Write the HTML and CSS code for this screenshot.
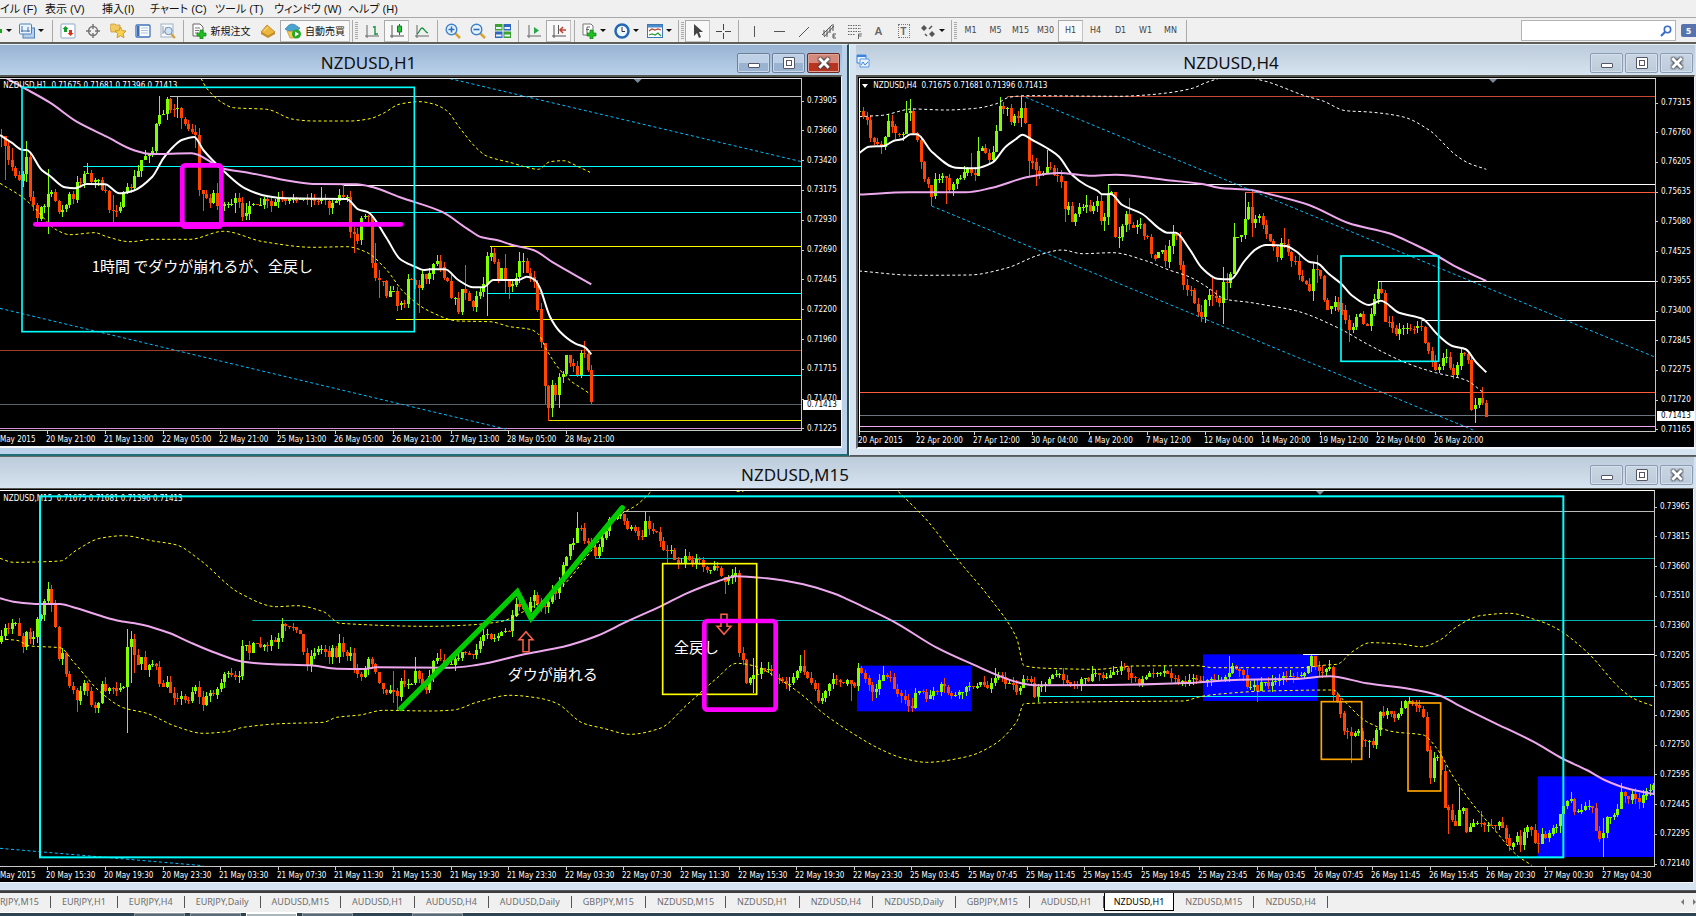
FILE: index.html
```html
<!DOCTYPE html>
<html lang="ja">
<head>
<meta charset="utf-8">
<title>NZDUSD,H1</title>
<link rel="stylesheet" href="styles.css">
</head>
<body>
<nav class="menu">
  <button>イル (F)</button><button>表示 (V)</button><button>挿入(I)</button><button>チャート (C)</button><button>ツール (T)</button><button>ウィンドウ (W)</button><button>ヘルプ (H)</button>
</nav>
<div class="toolbar" role="toolbar">
  <button class="tool tool-edge" aria-label="新規チャート"><svg class="edge" viewBox="0 0 3 16"><path d="M0 6h2v4H0z" fill="#1fa01f"/></svg><i class="caret"></i></button>
  <button class="tool tool-wide" aria-label="チャート一覧"><svg class="ic" viewBox="0 0 16 16"><rect x="4" y="5" width="11.500" height="10" fill="#b7cfe8" stroke="#4f82b8"/><rect x=".5" y="1" width="12" height="10" rx="1" fill="#eaf3fc" stroke="#4f82b8"/><path d="M3 3v6M2 8h9M9 4v5" stroke="#3f72a8" fill="none"/></svg><i class="caret"></i></button>
  <i class="sep"></i>
  <button class="tool" aria-label="気配値表示"><svg class="ic" viewBox="0 0 16 16"><rect x="1" y="1" width="14" height="14" rx="1" fill="#fff" stroke="#8ba9c8"/><path d="M5.500 3l3 3H7v3H4V6H2.500z" fill="#159a2c"/><path d="M10.500 13l-3-3H9V7h3v3h1.500z" fill="#df3318"/></svg></button>
  <button class="tool" aria-label="データウィンドウ"><svg class="ic" viewBox="0 0 16 16" fill="none" stroke="#777"><circle cx="8" cy="8" r="4.500" stroke-width="1.500"/><path d="M8 1v5M8 10v5M1 8h5M10 8h5" stroke-width="1.500"/></svg></button>
  <button class="tool" aria-label="ナビゲーター"><svg class="ic" viewBox="0 0 16 16"><path d="M0 3l1-2h4l1 1h4v7H1z" fill="#f1cb62" stroke="#c2953a" stroke-width=".7"/><path d="M10.500 4l1.700 3.600 3.800.4-2.800 2.700.8 4-3.500-2-3.500 2 .8-4L5 8l3.800-.4z" fill="#fbd24c" stroke="#c08a24" stroke-width=".8"/></svg></button>
  <button class="tool" aria-label="ターミナル"><svg class="ic" viewBox="0 0 16 16"><rect x="1" y="2" width="14" height="12" rx="1" fill="#fff" stroke="#3f74bb" stroke-width="1.300"/><path d="M2 3h2.500v10H2z" fill="#3c6db5"/><path d="M6 5h7M6 7.500h7M6 10h7" stroke="#a9c2df"/></svg></button>
  <button class="tool" aria-label="ストラテジーテスター"><svg class="ic" viewBox="0 0 16 16"><rect x="1" y="1" width="12" height="13" fill="#f7fafd" stroke="#9fb1c4"/><path d="M3 3v8M5 5h2M3 9h4" stroke="#8899aa"/><circle cx="8.500" cy="8" r="3.700" fill="#cfe3f5" stroke="#7090b0"/><path d="M11 11l4 4" stroke="#d79b2e" stroke-width="2"/></svg></button>
  <i class="sep"></i>
  <button class="tool tool-text tool-order"><svg class="ic" viewBox="0 0 16 16"><path d="M2 1h7l3 3v9H2z" fill="#fff" stroke="#666"/><path d="M4 5h5M4 7.500h4M4 10h3" stroke="#777"/><path d="M9 7h3v3h3v3h-3v3H9v-3H6v-3h3z" fill="#22bf22" stroke="#0d7f12" stroke-width=".7"/></svg>新規注文</button>
  <button class="tool" aria-label="メタエディター"><svg class="ic" viewBox="0 0 16 16"><path d="M1 9l6-7 8 7-7 4z" fill="#edb73e" stroke="#a9741b" stroke-width=".7"/><path d="M1 9v2l7 4 7-4V9l-7 4z" fill="#c68a23"/><path d="M4 8l4-4" stroke="#ffe49a"/></svg></button>
  <button class="tool tool-text tool-auto on"><svg class="ic" viewBox="0 0 16 16"><path d="M2 8h11l-2 7H5z" fill="#f0ca50" stroke="#b68d26" stroke-width=".6"/><path d="M0 6c2-1 3-5 7-5s5 3 8 4c-1 3-13 4-15 1z" fill="#4ba3cf" stroke="#2b78a0" stroke-width=".6"/><circle cx="11.500" cy="11" r="4.500" fill="#28a728"/><path d="M10 8.500l4 2.500-4 2.500z" fill="#fff"/></svg>自動売買</button>
  <i class="sep sep-thin"></i><i class="grip"></i>
  <button class="tool" aria-label="バーチャート"><svg class="ic" viewBox="0 0 16 16" fill="none"><path d="M3 2v13M1 13h14" stroke="#666"/><path d="M11 3v9M9 4h2M11 11h3" stroke="#1a9140" stroke-width="1.400"/></svg></button>
  <button class="tool on" aria-label="ローソク足"><svg class="ic" viewBox="0 0 16 16" fill="none"><path d="M3 2v13M1 13h14M10.500 1v11" stroke="#555"/><path d="M8.500 3h4v6h-4z" fill="#29c43c" stroke="#0f7d25"/></svg></button>
  <button class="tool" aria-label="ラインチャート"><svg class="ic" viewBox="0 0 16 16" fill="none"><path d="M3 2v13M1 13h14" stroke="#666"/><path d="M3 11c3-2 3-6 5-6s3 4 6 5" stroke="#1a9140" stroke-width="1.300"/></svg></button>
  <i class="sep"></i>
  <button class="tool" aria-label="ズームイン"><svg class="ic" viewBox="0 0 16 16"><path d="M10 10l5 5" stroke="#d9a336" stroke-width="2.500"/><circle cx="6.500" cy="6.500" r="5.300" fill="#e6f3ff" stroke="#3f83c9" stroke-width="1.400"/><path d="M3.500 6.500h6M6.500 3.500v6" stroke="#2c6fb8" stroke-width="1.600"/></svg></button>
  <button class="tool" aria-label="ズームアウト"><svg class="ic" viewBox="0 0 16 16"><path d="M10 10l5 5" stroke="#d9a336" stroke-width="2.500"/><circle cx="6.500" cy="6.500" r="5.300" fill="#e6f3ff" stroke="#3f83c9" stroke-width="1.400"/><path d="M3.500 6.500h6" stroke="#2c6fb8" stroke-width="1.600"/></svg></button>
  <button class="tool" aria-label="整列"><svg class="ic" viewBox="0 0 16 16"><path d="M0 1h7.500v6.500H0zM8.500 8.500H16V15H8.500z" fill="#3aa32f"/><path d="M8.500 1H16v6.500H8.500zM0 8.500h7.500V15H0z" fill="#2f66c2"/><path d="M1 4h5.500v2H1zM9.500 4H15v2H9.500zM1 11.500h5.500v2H1zM9.500 11.500H15v2H9.500z" fill="#e6f1fb"/></svg></button>
  <i class="sep"></i>
  <button class="tool" aria-label="自動スクロール"><svg class="ic" viewBox="0 0 16 16"><path d="M3 2v13M1 13h14" stroke="#666"/><path d="M8 4l5 3.500L8 11z" fill="#28a846"/></svg></button>
  <button class="tool on" aria-label="チャートシフト"><svg class="ic" viewBox="0 0 16 16" fill="none"><path d="M3 2v13M1 13h14M7.500 2v9" stroke="#555"/><path d="M15 7H9M12 4L9 7l3 3" stroke="#c8402c" stroke-width="1.500"/></svg></button>
  <i class="sep"></i>
  <button class="tool tool-drop" aria-label="インディケータ"><svg class="ic" viewBox="0 0 16 16"><path d="M2 1h8l2 2v9H2z" fill="#fff" stroke="#777"/><path d="M6 10V4h3M5 6.500h3" stroke="#666" fill="none"/><path d="M9 7h3v3h3v3h-3v3H9v-3H6v-3h3z" fill="#22bf22" stroke="#0d7f12" stroke-width=".7"/></svg><i class="caret"></i></button>
  <button class="tool tool-drop" aria-label="時間足設定"><svg class="ic" viewBox="0 0 16 16"><circle cx="8" cy="8" r="6.500" fill="#eef6fe" stroke="#2368b4" stroke-width="2.500"/><path d="M8 4v4.500h3" fill="none" stroke="#333"/></svg><i class="caret"></i></button>
  <button class="tool tool-drop" aria-label="テンプレート"><svg class="ic" viewBox="0 0 16 16"><rect x=".5" y="1.500" width="15" height="13" fill="#fff" stroke="#3c78b4"/><path d="M1 2h14v2.500H1z" fill="#4b8dcc"/><path d="M2 8l3-2 3 1 3-1 3 1" fill="none" stroke="#b8402b" stroke-width="1.200"/><path d="M2 12l3-1 3 1 3-2 3 3" fill="none" stroke="#279b3b" stroke-width="1.200"/></svg><i class="caret"></i></button>
  <i class="sep sep-thin"></i><i class="grip"></i>
  <button class="tool on" aria-label="カーソル"><svg class="ic" viewBox="0 0 16 16"><path d="M4 1v12l3-3 2 5 2-1-2-5h4z" fill="#444"/></svg></button>
  <button class="tool" aria-label="十字カーソル"><svg class="ic" viewBox="0 0 16 16"><path d="M8.500 1v6M8.500 10v6M1 8.500h6M10 8.500h6" stroke="#444"/></svg></button>
  <i class="sep"></i>
  <button class="tool" aria-label="垂直線"><svg class="ic" viewBox="0 0 16 16"><path d="M8.500 3v11" stroke="#555"/></svg></button>
  <button class="tool" aria-label="水平線"><svg class="ic" viewBox="0 0 16 16"><path d="M3 8.500h11" stroke="#555"/></svg></button>
  <button class="tool" aria-label="トレンドライン"><svg class="ic" viewBox="0 0 16 16"><path d="M3 14L13 4" stroke="#555"/></svg></button>
  <button class="tool" aria-label="チャネル"><svg class="ic" viewBox="0 0 16 16" fill="none" stroke="#555"><path d="M1 12L11 2M3 14L13 3M6 7v7M9 4v6M3 7v6M12 1v7"/><path d="M15 11h-3v4h3M12 13h2"/></svg></button>
  <button class="tool" aria-label="フィボナッチ"><svg class="ic" viewBox="0 0 16 16" fill="none" stroke="#666"><path d="M2 2.500h13M2 5.500h13M2 8.500h13M2 11.500h7" stroke-dasharray="1.500 1"/><path d="M12.500 16v-5H16M12.500 13h3"/></svg></button>
  <button class="tool tool-a">A</button>
  <button class="tool tool-a tool-t"><span>T</span></button>
  <button class="tool tool-drop" aria-label="矢印"><svg class="ic" viewBox="0 0 16 16" fill="#555"><path d="M4 2l3 3-3 3-3-3zM12 8l3 3-3 3-3-3z"/><path d="M9 6l3-3M5 11l2 2" stroke="#555" stroke-width="1.500"/></svg><i class="caret"></i></button>
  <i class="sep sep-thin"></i><i class="grip"></i>
  <button class="tool tf">M1</button><button class="tool tf">M5</button><button class="tool tf">M15</button><button class="tool tf">M30</button><button class="tool tf on">H1</button><button class="tool tf">H4</button><button class="tool tf">D1</button><button class="tool tf">W1</button><button class="tool tf">MN</button>
  <i class="sep"></i>
  <div class="search"><input type="text" aria-label="検索"><svg viewBox="0 0 12 12" fill="none" stroke="#3a6cc8" stroke-width="1.600"><circle cx="7.500" cy="4.500" r="3.200"/><path d="M5 7l-4 4" stroke-width="2.200"/></svg></div>
  <button class="chat" aria-label="メッセージ"><span>5</span></button>
</div>

<main class="desk">
  <section class="win win-h1 active">
    <header class="bar"><h2>NZDUSD,H1</h2><button class="wb min" aria-label="最小化"><i></i></button><button class="wb max" aria-label="最大化"><i></i></button><button class="wb close" aria-label="閉じる"><svg viewBox="0 0 12 12"><path d="M2 2l8 8M10 2l-8 8"/></svg></button></header>
    <div class="chart" id="h1"></div>
  </section>
  <section class="win win-h4">
    <header class="bar"><svg class="docs" viewBox="0 0 14 14"><path d="M1 1h9v8H1z" fill="#e8f2fd" stroke="#3d84dd"/><path d="M1 1h9v2H1z" fill="#3d84dd"/><path d="M4 5h9v8H4z" fill="#e8f2fd" stroke="#5a9aea"/><path d="M5 11l2-3 2 3 3-3" fill="none" stroke="#3d84dd"/></svg><h2>NZDUSD,H4</h2><button class="wb min" aria-label="最小化"><i></i></button><button class="wb max" aria-label="最大化"><i></i></button><button class="wb close" aria-label="閉じる"><svg viewBox="0 0 12 12"><path d="M2 2l8 8M10 2l-8 8"/></svg></button></header>
    <div class="chart" id="h4"></div>
  </section>
  <section class="win win-m15">
    <header class="bar"><h2>NZDUSD,M15</h2><button class="wb min" aria-label="最小化"><i></i></button><button class="wb max" aria-label="最大化"><i></i></button><button class="wb close" aria-label="閉じる"><svg viewBox="0 0 12 12"><path d="M2 2l8 8M10 2l-8 8"/></svg></button></header>
    <div class="chart" id="m15"></div>
  </section>
</main>

<nav class="tabs">
  <button>RJPY,M15</button><button>EURJPY,H1</button><button>EURJPY,H4</button><button>EURJPY,Daily</button><button>AUDUSD,M15</button><button>AUDUSD,H1</button><button>AUDUSD,H4</button><button>AUDUSD,Daily</button><button>GBPJPY,M15</button><button>NZDUSD,M15</button><button>NZDUSD,H1</button><button>NZDUSD,H4</button><button>NZDUSD,Daily</button><button>GBPJPY,M15</button><button>AUDUSD,H1</button><button class="current">NZDUSD,H1</button><button>NZDUSD,M15</button><button>NZDUSD,H4</button>
  <span class="scroll"><i class="left"></i><i class="right"></i></span>
</nav>
<footer class="taskbar"><i></i><i></i><i class="lit"></i><i></i><i class="far"></i></footer>
<script src="charts.js"></script>
</body>
</html>
```
FILE: styles.css
```css
* { box-sizing: border-box; }
html, body { height: 100%; }
body {
  margin: 0;
  display: grid;
  grid-template-columns: minmax(0, 1fr);
  grid-template-rows: 18px 26px minmax(0, 1fr) 22px 3px;
  background: #f0f0f0;
  font-family: "Noto Sans", "Noto Sans CJK JP", sans-serif;
  color: #111;
  overflow: hidden;
}
button { font: inherit; color: inherit; border: 0; background: none; padding: 0; margin: 0; }

.menu {
  display: grid;
  grid-template-columns: 45px 57px 48px 65px 59px 74px 60px;
  font-family: "Liberation Sans", "Noto Sans CJK JP", sans-serif;
  font-size: 11px;
  line-height: 14px;
  font-feature-settings: "palt";
  border-bottom: 1px solid #a8a8a8;
}
.menu button { text-align: left; white-space: nowrap; }

.toolbar {
  display: flex;
  align-items: center;
  padding-top: 1px;
  border-bottom: 2px solid #5e5f58;
  background: #f0f0f0;
}
.tool {
  flex: none;
  width: 25px;
  height: 22px;
  display: flex;
  align-items: center;
  justify-content: center;
}
.ic { width: 16px; height: 16px; flex: none; }
.edge { width: 3px; height: 16px; }
.caret { border: 3px solid transparent; border-top-color: #111; border-bottom-width: 0; margin-left: 3px; }
.tool-edge { width: 14px; justify-content: flex-start; }
.tool-wide { width: 35px; }
.tool-drop { width: 33px; }
.tool.on { background: #f8f8f8; border: 1px solid #c2c2c2; border-top-color: #a9a9a9; border-left-color: #a9a9a9; }
.tool-text {
  gap: 4px;
  font-family: "Noto Sans CJK JP", sans-serif;
  font-size: 10px;
  line-height: 12px;
  white-space: nowrap;
}
.tool-order { width: 69px; }
.tool-auto { width: 70px; }
.sep { flex: none; width: 1px; height: 22px; margin: 0 2px 0 3px; background: #aaa; }
.sep-thin { margin: 0 1px 0 2px; }
.grip { flex: none; width: 3px; height: 18px; margin: 0 1px; background: repeating-linear-gradient(#aaa 0 1px, #f0f0f0 1px 2px); }
.tool-a { font-size: 11px; font-weight: 600; color: #666; }
.tool-t span { border: 1px dotted #777; width: 12px; line-height: 12px; }
.tf { font-family: "DejaVu Sans", sans-serif; font-size: 8px; color: #444; }
.search {
  margin-left: auto;
  width: 155px;
  height: 21px;
  display: flex;
  align-items: center;
  background: #fff;
  border: 1px solid #b4b4b4;
}
.search input { flex: 1; min-width: 0; height: 17px; border: 0; outline: 0; background: none; }
.search svg { width: 12px; height: 12px; margin-right: 3px; }
.chat { width: 20px; height: 20px; padding-left: 5px; overflow: hidden; }
.chat span { display: block; width: 20px; height: 13px; padding-left: 5px; background: #5673ad; color: #fff; font-size: 9px; font-weight: 700; line-height: 13px; text-align: left; border-radius: 2px; }

.desk {
  display: grid;
  grid-template-columns: minmax(0, 849fr) minmax(0, 847fr);
  grid-template-rows: minmax(0, 412fr) minmax(0, 435fr);
  background: #b9cde0;
}
.win {
  display: flex;
  flex-direction: column;
  min-width: 0;
  min-height: 0;
  background: #d6e3f0;
  border-top: 1px solid #e8f0f8;
  border-bottom: 1px solid #55585c;
}
.win-h1 { background: #bad1ea; padding-right: 5px; padding-bottom: 6px; border-right: 2px solid #2b4c55; border-bottom: 2px solid #1f6c74; }
.win-h4 { padding: 0 1px 6px 6px; border-left: 1px solid #f4f8fc; }
.win-m15 { grid-column: 1 / -1; padding: 0 2px 7px 0; border-top-color: #66696c; }
.bar {
  flex: none;
  height: 30px;
  display: flex;
  align-items: center;
  gap: 2px;
  padding: 5px 2px 0 0;
  background: linear-gradient(#bccbda, #d6e3f0);
}
.active .bar { background: linear-gradient(#98b3d2, #bad1ea); }
.win-m15 .bar { height: 31px; padding: 4px 1px 0 0; }
.bar h2 { flex: 1; margin: 0; padding-left: 2px; font-size: 17px; font-weight: 400; line-height: 20px; text-align: center; }
.docs { width: 14px; height: 14px; align-self: flex-start; margin-top: 4px; }
.wb {
  width: 33px;
  height: 20px;
  display: flex;
  align-items: center;
  justify-content: center;
  border: 1px solid #8b9bb2;
  border-radius: 2px;
  background: linear-gradient(#c9d6e4, #bccbdb);
  box-shadow: inset 0 0 0 1px #d5e0ec;
}
.active .wb { background: linear-gradient(#bdd0e6 50%, #9ab3d0 50%); border-color: #6c809b; box-shadow: inset 0 0 0 1px #c9d9ea; }
.wb.min i { width: 12px; height: 5px; margin-top: 6px; background: #fff; border: 1px solid #556; border-radius: 1px; }
.wb.max i { width: 12px; height: 12px; border: 1px solid #556; background: #fff; padding: 3px; border-radius: 1px; }
.wb.max i::before { content: ""; display: block; width: 4px; height: 4px; background: #fff; outline: 1px solid #556; }
.wb svg { width: 14px; height: 14px; }
.wb path { stroke: #fff; stroke-width: 2.500; fill: none; filter: drop-shadow(0 0 1px #333) drop-shadow(0 0 1px #445); }
.active .wb.close { background: linear-gradient(#d58a7c 50%, #b8341e 50%); border-color: #6a2a26; box-shadow: inset 0 0 0 1px #dba297; }

.chart {
  flex: 1;
  min-height: 0;
  position: relative;
  display: grid;
  grid-template-columns: minmax(0, 1fr) 39px;
  grid-template-rows: minmax(0, 1fr) 15px;
  padding-top: 1px;
  background: #000;
  border-top: 2px solid #55564f;
  border-right: 2px solid #f2f6fa;
  border-bottom: 2px solid #f2f6fa;
}
.win-h1 .chart { border-right-width: 1px; }
.win-h4 .chart { border-left: 2px solid #666; padding-left: 1px; grid-template-columns: minmax(0, 1fr) 38px; border-right-width: 1px; }
.win-m15 .chart { grid-template-columns: minmax(0, 1fr) 38px; border-top-width: 1px; border-right-width: 1px; border-bottom-width: 1px; }
.plot { width: 100%; height: 100%; min-height: 0; overflow: hidden; border-top: 1px solid #e0e0e0; border-right: 1px solid #c8c8c8; border-bottom: 1px solid #c8c8c8; }
.win-h4 .plot { border-left: 1px solid #fff; }
.win-m15 .plot { border-top-color: #fff; }
.times { width: 100%; height: 15px; overflow: visible; grid-row: 2; grid-column: 1; }
.times text, .plot .quote, .prices { font-family: "DejaVu Sans Condensed", sans-serif; font-size: 8px; }
.times text, .plot .quote { fill: #fff; white-space: pre; }
.times path, .plot path { fill: none; }
.prices {
  grid-column: 2;
  grid-row: 1 / 3;
  position: relative;
  display: flex;
  flex-direction: column;
  justify-content: space-between;
  padding: 18px 0 12px;
  color: #fff;
  line-height: 10px;
}
.prices span { display: flex; align-items: center; gap: 3px; }
.prices span::before { content: ""; width: 2px; height: 1px; background: #ccc; }
.win-h4 .prices { padding: 20px 0 12px; }
.win-m15 .prices { padding: 12px 0 13px; }
.prices b {
  position: absolute;
  left: 1px;
  right: 0;
  top: 322px;
  padding-left: 4px;
  background: #fff;
  color: #000;
  font-weight: 400;
}
.win-h4 .prices b { top: 333px; }
.plot .note { fill: #fff; font-size: 15px; font-family: "Noto Sans CJK JP", sans-serif; }

.tabs {
  display: flex;
  align-items: center;
  padding-bottom: 1px;
  background: #f0f0f0;
  border-top: 2px solid #3c3c3c;
  border-bottom: 1px solid #fff;
  font-size: 9px;
  line-height: 12px;
  color: #6d6d6d;
}
.tabs button { flex: none; padding: 0 11px; border-right: 1px solid #555; white-space: nowrap; }
.tabs button:first-child { padding-left: 0; }
.tabs .current { align-self: stretch; padding: 0 9px; background: #fff; color: #000; border: 1px solid #000; border-top: 0; }
.scroll { margin-left: auto; display: flex; gap: 9px; }
.scroll i { border: 3px solid transparent; }
.scroll .left { border-right-color: #777; border-left-width: 0; }
.scroll .right { border-left-color: #777; border-right-width: 0; }
.taskbar { display: flex; gap: 5px; padding-left: 134px; background: #2d4450; }
.taskbar i { width: 51px; background: #5b6c76; border: 1px solid #8d999f; border-bottom: 0; }
.taskbar .lit { background: #a9b6bb; border-color: #fff; }
.taskbar .far { margin-left: 54px; }
```
FILE: charts.js
```js
// Chart geometry is stored in thirds of a pixel, measured from the pane's reference corner.
const U = 3;
const PITCH = 10.8;
const CYAN = '#00ffff', TEAL = '#00b4b4', WHITE = '#ffffff', YELLOW = '#ffff00', PINK = '#eea9ee';
const UP = '#7fff00', DOWN = '#ff4500', SKY = '#00bfff', MAGENTA = '#ff00ff', BLUE = '#0000ff';

const panes = {
  h1: {
    dx: 0, dy: -27, quote: [10, 'NZDUSD,H1  0.71675 0.71681 0.71396 0.71413', 51], marker: 1913,
    prices: ['0.73905', '0.73660', '0.73420', '0.73175', '0.72930', '0.72690', '0.72445', '0.72200', '0.71960', '0.71715', '0.71470', '0.71225'],
    now: '0.71413', firstTime: 142,
    times: ['20 May 21:00', '21 May 13:00', '22 May 05:00', '22 May 21:00', '25 May 13:00', '26 May 05:00', '26 May 21:00', '27 May 13:00', '28 May 05:00', '28 May 21:00'],
    lead: 'May 2015',
    levels: [[510, 78, '#c4c4c4'], [250, 289, CYAN], [1028, 346, WHITE], [1105, 427, CYAN], [1470, 529, YELLOW], [1460, 670, CYAN], [1188, 748, YELLOW], [0, 840, '#a03c28'], [1708, 916, CYAN], [0, 1004, '#59636c'], [1645, 1051, '#e6e600'], [0, 1075, '#d88fd8']],
    fills: [],
    price: [0,195,15,235,17,280,28,270,38,300,60,335,68,310,80,250,90,385,103,410,110,450,123,408,135,410,143,370,160,370,167,400,180,430,198,405,208,375,222,395,232,322,244,340,257,290,275,345,293,320,310,382,320,360,327,420,345,425,366,400,372,360,400,350,405,295,415,305,427,260,440,255,460,240,470,140,486,140,500,90,512,120,532,110,545,155,558,165,575,185,590,195,597,362,612,375,628,405,640,365,652,415,672,400,690,410,707,385,715,400,730,445,745,405,775,410,795,385,812,410,835,385,860,400,875,380,900,390,935,385,960,400,967,375,985,410,1000,395,1020,375,1044,385,1050,490,1065,490,1075,520,1083,440,1105,440,1116,585,1130,635,1145,620,1157,680,1165,655,1180,665,1192,708,1212,700,1224,620,1240,635,1255,660,1267,610,1282,630,1300,575,1315,570,1330,620,1340,620,1352,680,1365,690,1377,730,1386,655,1398,670,1410,700,1420,720,1428,680,1445,660,1453,630,1460,555,1472,545,1485,580,1495,640,1505,595,1515,630,1530,655,1545,640,1558,575,1575,580,1582,620,1600,630,1612,720,1622,715,1624,925,1638,955,1645,1015,1655,940,1668,980,1677,925,1690,905,1698,850,1710,885,1720,885,1732,915,1742,848,1752,850,1764,905,1775,1003],
    spikes: [[3,178,232],[13,210,330],[35,235,305],[78,213,336],[143,297,492],[262,280,305],[338,375,455],[477,78,168],[498,80,150],[510,85,130],[532,78,145],[542,112,178],[585,165,235],[607,360,422],[650,340,420],[706,370,430],[736,400,450],[964,350,400],[986,390,435],[1028,346,385],[1061,470,548],[1125,520,635],[1136,600,684],[1254,630,728],[1396,585,690],[1460,545,738],[1472,528,573],[1514,552,670],[1526,630,686],[1560,547,640],[1570,550,610],[1635,895,1000],[1645,945,1053],[1656,930,1040],[1678,910,1016],[1752,812,862]],
    lines: [
      [WHITE, 6, 0, [0,195,35,218,70,240,80,240,125,300,150,318,195,352,225,355,260,342,315,343,358,370,400,362,457,320,490,265,520,230,545,210,583,201,610,240,670,302,735,355,800,378,860,385,1040,387,1075,418,1105,427,1160,505,1200,567,1245,590,1270,600,1290,598,1335,598,1375,630,1420,652,1450,652,1480,630,1555,630,1580,620,1605,630,1620,655,1650,740,1680,785,1725,820,1755,832,1774,853]],
      [PINK, 6, 0, [20,25,65,50,150,98,230,155,320,200,400,240,455,252,575,250,640,280,665,295,745,308,870,333,950,342,1070,343,1120,352,1200,382,1325,425,1400,475,1445,502,1490,510,1540,526,1600,540,1660,578,1774,643]],
      [YELLOW, 3, 1, [603,25,620,55,665,97,700,113,800,118,880,148,940,153,1050,153,1110,146,1150,130,1200,102,1260,95,1300,102,1340,122,1380,175,1430,235,1460,258,1540,280,1580,292,1615,298,1650,275,1690,272,1735,290,1770,307]],
      [YELLOW, 3, 1, [0,340,65,380,100,410,170,480,210,494,285,488,320,500,390,515,460,508,570,508,670,484,790,515,940,532,1040,530,1100,547,1160,600,1210,665,1285,722,1375,753,1470,755,1530,770,1590,778,1615,792,1640,840,1680,900,1715,935,1750,958,1770,972]],
      [SKY, 3, 1, [0,715,1260,1016,1520,1078]],
      [SKY, 3, 1, [1350,26,2405,275]]
    ],
    frames: [[66,52,1243,785,CYAN,5,0],[547,286,664,470,MAGENTA,14,3]],
    strokes: [[MAGENTA, 14, [106,463,1203,463]]],
    notes: [[275, 606, '1時間 でダウが崩れるが、全戻し']]
  },
  h4: {
    dx: -33, dy: -27, quote: [73, 'NZDUSD,H4  0.71675 0.71681 0.71396 0.71413', 50], marker: 1932, menu: true,
    prices: ['0.77315', '0.76760', '0.76205', '0.75635', '0.75080', '0.74525', '0.73955', '0.73400', '0.72845', '0.72275', '0.71720', '0.71165'],
    now: '0.71413', firstTime: 33,
    times: ['20 Apr 2015', '22 Apr 20:00', '27 Apr 12:00', '30 Apr 04:00', '4 May 20:00', '7 May 12:00', '12 May 04:00', '14 May 20:00', '19 May 12:00', '22 May 04:00', '26 May 20:00'],
    levels: [[475, 79, '#c84a32'], [777, 343, WHITE], [1188, 367, '#ff5a3c'], [1587, 634, WHITE], [1717, 751, WHITE], [30, 967, '#ff5a3c'], [30, 1036, '#6c7680'], [30, 1069, PINK]],
    fills: [],
    price: [30,125,38,145,50,140,60,185,66,220,80,210,92,235,105,220,108,180,120,140,130,175,140,195,160,195,165,175,173,115,182,125,195,200,210,210,217,315,230,335,238,350,248,385,258,330,272,320,290,318,295,365,305,360,318,330,325,320,340,335,347,295,360,290,370,320,382,305,388,230,400,240,418,265,430,270,432,195,445,180,453,100,465,120,475,110,485,160,498,135,510,155,520,95,530,185,538,270,555,275,563,310,580,315,590,285,602,290,612,310,635,325,645,425,657,405,668,450,680,430,692,405,712,410,722,425,745,395,756,455,768,430,778,360,790,375,798,510,812,495,830,435,845,475,875,465,885,505,900,505,908,570,925,550,940,540,955,590,962,500,975,485,990,520,993,610,1005,650,1030,665,1037,705,1050,735,1060,740,1070,680,1090,675,1112,695,1122,635,1140,640,1145,595,1155,490,1170,500,1185,490,1188,400,1203,410,1210,480,1222,430,1240,460,1250,475,1255,530,1265,505,1285,570,1298,500,1312,535,1325,570,1340,575,1350,620,1370,640,1385,665,1393,590,1410,600,1422,670,1428,720,1445,715,1460,690,1470,730,1485,710,1493,780,1510,770,1525,730,1540,740,1546,785,1560,750,1572,715,1580,660,1590,655,1600,680,1608,755,1620,760,1640,795,1655,775,1680,770,1700,775,1720,765,1728,825,1742,855,1755,885,1765,910,1772,880,1785,857,1800,870,1805,920,1820,915,1828,845,1845,850,1860,880,1865,1015,1880,1005,1890,985,1900,1000,1910,1040],
    spikes: [[38,112,148],[118,133,195],[173,92,185],[182,88,155],[248,345,407],[290,318,402],[366,248,318],[388,202,310],[453,82,180],[463,95,130],[518,78,170],[540,210,320],[560,265,350],[593,240,295],[645,340,458],[712,375,430],[766,430,485],[777,345,465],[810,470,533],[842,385,480],[970,465,553],[1090,625,710],[1122,590,760],[1132,610,690],[1155,460,595],[1187,370,508],[1208,362,500],[1305,475,535],[1402,556,640],[1392,575,692],[1500,735,815],[1585,635,700],[1720,746,783],[1790,838,880],[1878,985,1060],[1899,952,1005]],
    lines: [
      [WHITE, 6, 0, [30,250,60,230,105,228,135,212,160,208,185,193,203,193,250,247,320,293,380,295,430,278,470,230,500,208,520,194,550,210,600,238,630,260,670,315,710,345,745,362,760,373,785,372,820,405,880,432,930,475,955,488,980,488,1020,535,1060,595,1105,626,1145,628,1185,575,1220,538,1250,525,1310,528,1340,543,1380,575,1405,580,1440,612,1475,640,1510,677,1560,705,1595,692,1650,728,1720,746,1765,793,1810,828,1850,838,1880,875,1912,907]],
      [PINK, 6, 0, [30,374,180,367,350,367,430,353,540,320,630,309,720,317,800,314,950,330,1060,342,1120,355,1200,359,1260,372,1380,405,1500,460,1620,490,1700,525,1760,555,1820,590,1912,633]],
      [WHITE, 3, 1, [30,140,100,136,190,117,290,120,380,115,440,102,480,82,530,77,810,79,880,76,960,68,1030,55,1070,38,1110,25]],
      [WHITE, 3, 1, [1215,25,1260,37,1370,78,1420,92,1490,122,1560,126,1660,140,1740,180,1820,255,1860,280,1912,298]],
      [WHITE, 3, 1, [30,603,200,616,360,615,470,595,570,555,640,540,700,551,790,548,890,572,960,600,1020,620,1080,655,1130,688,1200,697,1260,707,1340,722,1470,775,1560,825,1680,882,1760,908,1850,930,1900,965]],
      [SKY, 3, 1, [248,408,1872,1080]],
      [SKY, 3, 1, [530,82,2415,860]]
    ],
    frames: [[1476,558,1769,874,CYAN,5,0]],
    strokes: [],
    notes: []
  },
  m15: {
    dx: 0, dy: -108, quote: [10, 'NZDUSD,M15  0.71675 0.71681 0.71396 0.71413', 134], marker: 3960,
    prices: ['0.73965', '0.73815', '0.73660', '0.73510', '0.73360', '0.73205', '0.73055', '0.72905', '0.72750', '0.72595', '0.72445', '0.72295', '0.72140'],
    firstTime: 142,
    times: ['20 May 15:30', '20 May 19:30', '20 May 23:30', '21 May 03:30', '21 May 07:30', '21 May 11:30', '21 May 15:30', '21 May 19:30', '21 May 23:30', '22 May 03:30', '22 May 07:30', '22 May 11:30', '22 May 15:30', '22 May 19:30', '22 May 23:30', '25 May 03:45', '25 May 07:45', '25 May 11:45', '25 May 15:45', '25 May 19:45', '25 May 23:45', '26 May 03:45', '26 May 07:45', '26 May 11:45', '26 May 15:45', '26 May 20:30', '27 May 00:30', '27 May 04:30'],
    lead: 'May 2015',
    levels: [[1870, 169, '#bcbcbc'], [1785, 311, TEAL], [757, 495, TEAL], [3909, 598, WHITE], [3112, 724, CYAN]],
    fills: [[2571,632,2915,769],[3609,598,3953,738],[4613,964,4960,1206]],
    price: [0,560,10,520,22,530,35,505,50,500,57,540,70,580,80,520,90,550,105,545,112,485,125,480,132,440,143,400,153,440,165,515,176,610,190,590,197,655,208,695,225,715,232,752,243,690,258,680,265,720,275,760,285,760,295,740,305,690,318,715,330,690,345,705,360,695,375,705,380,585,391,545,402,600,413,630,427,600,437,655,448,620,470,640,480,700,500,685,512,715,525,730,545,725,560,745,575,710,590,690,600,745,612,750,622,715,640,715,660,690,670,655,700,665,715,675,725,570,745,565,750,610,760,565,780,575,805,575,815,550,830,570,845,510,860,520,880,515,897,525,905,575,920,630,935,595,950,585,970,580,990,610,1000,565,1010,615,1020,555,1035,610,1055,595,1063,655,1090,665,1100,605,1120,630,1140,690,1155,720,1165,695,1190,725,1200,680,1235,685,1247,640,1260,690,1280,700,1300,610,1320,610,1345,630,1370,610,1390,590,1420,605,1445,545,1460,530,1470,550,1490,545,1510,530,1530,525,1540,465,1550,445,1565,465,1580,470,1600,420,1615,455,1640,455,1655,400,1675,425,1680,325,1693,330,1700,295,1710,270,1725,255,1730,215,1745,220,1755,270,1770,260,1785,305,1800,260,1815,235,1830,190,1850,185,1865,180,1880,225,1895,210,1910,245,1925,245,1937,190,1950,230,1968,225,1983,270,1995,290,2015,280,2025,320,2040,330,2055,300,2080,330,2095,305,2110,335,2125,355,2140,330,2155,345,2170,385,2185,370,2195,360,2205,365,2210,320,2216,590,2230,625,2240,690,2255,655,2265,670,2280,635,2300,645,2315,650,2322,665,2340,680,2370,690,2385,650,2400,630,2415,650,2430,685,2445,700,2455,740,2470,725,2485,690,2505,670,2530,685,2545,675,2560,705,2573,635,2585,650,2600,680,2615,710,2635,690,2645,655,2670,665,2685,710,2705,730,2720,745,2733,765,2745,715,2765,705,2780,740,2795,705,2812,715,2825,685,2840,710,2860,725,2885,710,2910,690,2930,695,2945,680,2960,705,2980,665,3000,660,3015,685,3030,680,3050,710,3065,690,3075,665,3095,690,3103,725,3115,690,3135,685,3155,665,3170,655,3190,670,3215,690,3235,690,3245,665,3260,680,3275,660,3290,650,3305,665,3320,670,3345,645,3370,640,3390,660,3415,685,3440,660,3460,650,3500,648,3520,675,3540,685,3565,670,3600,675,3640,675,3680,670,3688,640,3705,635,3725,650,3735,685,3745,710,3758,685,3775,710,3785,670,3805,695,3825,675,3850,665,3870,660,3890,670,3910,655,3925,635,3935,600,3945,640,3960,660,3975,640,3990,635,4000,725,4015,750,4030,825,4045,830,4058,850,4070,820,4080,840,4090,865,4110,860,4122,875,4130,820,4140,765,4155,795,4165,750,4175,790,4195,775,4215,740,4230,738,4245,745,4260,760,4270,790,4280,885,4293,985,4303,900,4320,910,4333,1055,4350,1070,4362,1125,4375,1080,4380,1040,4392,1075,4400,1140,4410,1110,4425,1100,4440,1105,4460,1110,4480,1110,4500,1100,4515,1140,4530,1175,4550,1140,4560,1175,4575,1120,4590,1110,4605,1165,4615,1170,4625,1135,4640,1150,4660,1120,4675,1115,4682,1060,4700,1040,4715,1035,4725,1075,4745,1060,4765,1055,4780,1055,4790,1150,4805,1155,4815,1095,4835,1080,4850,1080,4860,1010,4880,1035,4895,1015,4915,1050,4935,1010,4950,1000,4965,980],
    spikes: [[143,381,448],[153,390,470],[230,700,773],[380,522,833],[391,528,683],[402,537,655],[920,580,648],[1018,537,625],[1180,648,745],[1190,700,770],[1212,645,695],[1244,605,690],[1318,583,620],[1730,172,262],[1936,172,245],[2000,270,323],[2172,375,417],[2226,575,628],[2257,610,715],[2398,600,655],[2410,585,660],[2454,685,745],[2552,675,738],[2616,680,738],[2648,632,675],[2733,730,772],[2983,640,695],[3103,665,727],[3275,632,665],[3686,602,680],[3772,675,740],[3930,600,650],[4051,815,922],[4106,855,910],[4346,1050,1138],[4378,995,1085],[4441,1068,1115],[4560,1125,1190],[4614,1135,1195],[4711,1012,1045],[4808,1090,1208],[4862,985,1060]],
    lines: [
      [PINK, 6, 0, [0,430,40,440,120,447,180,447,215,455,310,485,360,498,430,510,510,535,570,562,650,595,730,620,820,628,930,631,1010,641,1090,642,1130,637,1350,638,1430,630,1580,596,1690,575,1790,543,1880,500,1980,455,2060,415,2150,380,2210,364,2300,370,2410,388,2500,415,2530,427,2600,460,2690,505,2810,578,2900,620,3070,686,3110,691,3320,690,3560,684,3720,674,3880,672,3990,664,4100,685,4230,702,4320,722,4370,748,4480,802,4600,860,4690,912,4760,945,4820,978,4880,1000,4965,1018]],
      [YELLOW, 3, 1, [0,310,40,322,180,318,230,285,300,250,370,242,460,258,530,270,600,315,720,415,830,455,890,452,970,470,1020,505,1290,514,1390,511,1500,500,1570,470,1680,400,1780,280,1860,180,1910,150,1955,108]],
      [YELLOW, 3, 1, [2210,109,2230,109]],
      [YELLOW, 3, 1, [2695,110,2780,195,2870,310,2970,430,3050,550,3072,632,3140,640,3290,643,3400,633,3590,632,3640,638,3900,638,3980,630,4010,628,4060,588,4110,563,4200,567,4265,575,4320,555,4370,515,4440,482,4530,475,4600,492,4660,515,4760,590,4860,700,4900,730,4965,755]],
      [YELLOW, 3, 1, [0,552,50,556,90,573,180,578,220,620,300,710,370,758,440,775,530,815,610,835,680,830,730,817,840,806,970,802,1010,787,1080,780,1150,766,1290,768,1360,765,1430,742,1530,721,1620,730,1670,745,1750,805,1810,820,1890,838,1980,820,2060,750,2150,670,2210,625,2260,632,2350,680,2400,715,2470,775,2550,830,2640,882,2710,910,2780,922,2900,905,2980,870,3050,800,3072,746,3310,740,3550,738,3600,725,3650,718,3800,708,4000,705,4030,735,4100,800,4180,830,4270,840,4310,880,4360,965,4420,1050,4480,1120,4550,1200,4595,1231]],
      [SKY, 3, 1, [0,1180,610,1232]]
    ],
    frames: [[120,124,4690,1207,CYAN,6,0],[1988,326,2270,718,YELLOW,5,0],[3964,740,4085,913,'#ffa500',5,0],[4224,744,4322,1008,'#ffa500',5,0],[2113,498,2327,764,MAGENTA,14,3]],
    strokes: [['#00cc00', 16, [1203,760,1552,410,1593,490,1867,158]]],
    arrows: [[1578, 530, 1], [2172, 538, -1]],
    notes: [[1523, 675, 'ダウが崩れる'], [2022, 595, '全戻し']]
  }
};

function draw(id) {
  const p = panes[id];
  const X = v => (v + p.dx) / U;
  const Y = v => (v + p.dy) / U;
  const pts = a => {
    let d = '';
    for (let i = 0; i < a.length; i += 2) d += (i ? 'L' : 'M') + X(a[i]).toFixed(1) + ' ' + Y(a[i + 1]).toFixed(1);
    return d;
  };
  // Monotone cubic through the samples, using harmonic-mean slopes.
  const curve = a => {
    const n = a.length / 2;
    const px = i => X(a[2 * i]), py = i => Y(a[2 * i + 1]);
    const slope = i => {
      if (i === 0 || i === n - 1) return null;
      const l = (py(i) - py(i - 1)) / (px(i) - px(i - 1));
      const r = (py(i + 1) - py(i)) / (px(i + 1) - px(i));
      return l * r <= 0 ? 0 : 2 * l * r / (l + r);
    };
    let d = `M${px(0)} ${py(0)}`;
    for (let i = 1; i < n; i++) {
      const h = (px(i) - px(i - 1)) / 3, chord = (py(i) - py(i - 1)) / (3 * h);
      const m0 = slope(i - 1) ?? chord, m1 = slope(i) ?? chord;
      d += `C${(px(i - 1) + h).toFixed(1)} ${(py(i - 1) + m0 * h).toFixed(1)} ${(px(i) - h).toFixed(1)} ${(py(i) - m1 * h).toFixed(1)} ${px(i).toFixed(1)} ${py(i).toFixed(1)}`;
    }
    return d;
  };
  const out = [];

  p.fills.forEach(([a, b, c, d]) => out.push(`<rect x="${X(a)}" y="${Y(b)}" width="${(c - a) / U}" height="${(d - b) / U}" fill="${BLUE}"/>`));
  p.levels.forEach(([x, y, c]) => out.push(`<line x1="${X(x)}" x2="100%" y1="${Math.floor(Y(y)) + .5}" y2="${Math.floor(Y(y)) + .5}" stroke="${c}"/>`));

  // Candles follow the sampled price path, one per pitch; each opens at the previous close.
  const path = p.price, end = path[path.length - 2];
  let k = 0, open = path[1], seed = 7;
  const rnd = () => (seed = (seed * 16807) % 2147483647) / 2147483647;
  const first = p.dx ? 31 : 3;
  for (let x = first; x <= end + 4; x += PITCH) {
    while (k < path.length - 4 && path[k + 2] < x) k += 2;
    const t = Math.min(1, Math.max(0, (x - path[k]) / (path[k + 2] - path[k])));
    const close = path[k + 1] + (path[k + 3] - path[k + 1]) * t + (rnd() - .5) * 10;
    let hi = Math.min(open, close) - rnd() * 20;
    let lo = Math.max(open, close) + rnd() * 20;
    const s = p.spikes.find(q => Math.abs(q[0] - x) <= PITCH / 2);
    if (s) { hi = Math.min(s[1], open, close); lo = Math.max(s[2], open, close); }
    const up = close < open, cx = Math.round(X(x));
    const top = Math.round(Y(Math.min(open, close)));
    const h = Math.max(1, Math.round(Math.abs(close - open) / U));
    const y1 = Math.round(Y(hi));
    out.push(`<path d="M${cx - 1} ${top}h3v${h}h-3zM${cx} ${y1}h1v${Math.max(1, Math.round((lo - hi) / U))}h-1z" style="fill:${up ? UP : DOWN}"/>`);
    open = close;
  }

  p.lines.forEach(([c, w, dash, a]) => out.push(`<path d="${curve(a)}" stroke="${c}" stroke-width="${w / U}"${dash ? ' stroke-dasharray="3 2.500"' : ''}/>`));
  const m = X(p.marker);
  out.push(`<polygon points="${m - 4},0 ${m + 4},0 ${m},4" fill="#778899"/>`);
  out.push(`<text class="quote" x="${X(p.quote[0])}" y="${Y(p.quote[2] + 4)}">${p.quote[1]}</text>`);
  if (p.menu) out.push('<polygon points="2,5 8,5 5,9" fill="#fff"/>');
  p.notes.forEach(([x, y, s]) => out.push(`<text class="note" x="${X(x)}" y="${Y(y)}">${s}</text>`));
  (p.arrows || []).forEach(([x, y, d]) => {
    const ax = X(x), ay = Y(y);
    out.push(`<path d="M${ax} ${ay}l7 ${8 * d}h-4v${12 * d}h-6v${-12 * d}h-4z" stroke="#ff6347" stroke-width="1.500"/>`);
  });
  p.frames.forEach(([a, b, c, d, col, w, r]) => out.push(`<rect x="${X(a)}" y="${Y(b)}" width="${(c - a) / U}" height="${(d - b) / U}" rx="${r}" fill="none" stroke="${col}" stroke-width="${w / U}"/>`));
  p.strokes.forEach(([c, w, a]) => out.push(`<path d="${pts(a)}" stroke="${c}" stroke-width="${w / U}" stroke-linecap="round"/>`));

  const times = p.times.map((s, i) => {
    const x = Math.max(0, X(p.firstTime) + i * PITCH * 16 / U);
    return `<path d="M${Math.round(x) + .5} 0v3" stroke="#ccc"/><text x="${Math.round(x) - 1}" y="11">${s}</text>`;
  }).join('') + (p.lead ? `<text x="0" y="11">${p.lead}</text>` : '');

  document.getElementById(id).innerHTML =
    `<svg class="plot">${out.join('')}</svg><svg class="times">${times}</svg>` +
    `<div class="prices">${p.prices.map(v => `<span>${v}</span>`).join('')}${p.now ? `<b>${p.now}</b>` : ''}</div>`;
}

Object.keys(panes).forEach(draw);
```
